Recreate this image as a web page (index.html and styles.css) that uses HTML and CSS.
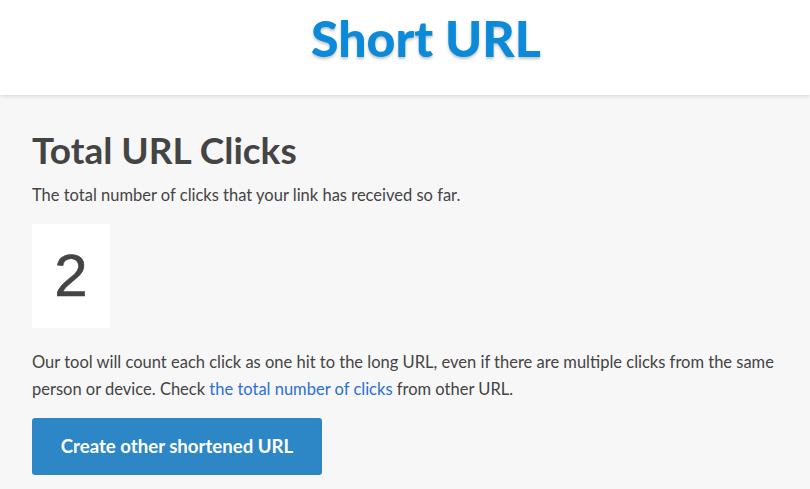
FILE: index.html
```html
<!DOCTYPE html>
<html lang="en">
<head>
  <meta charset="UTF-8" />
  <meta name="viewport" content="width=device-width, initial-scale=1.0"/>
  <title>Short URL - Total Clicks</title>
  <link rel="stylesheet" href="styles.css">
</head>
<body>
  <header class="site-header">
    <h1 class="logo">Short URL</h1>
  </header>

  <main class="content">
    <h2>Total URL Clicks</h2>
    <p class="lead">The total number of clicks that your link has received so far.</p>
    <div class="counter">2</div>
    <p class="note">Our tool will count each click as one hit to the long URL, even if there are multiple clicks from the same person or device. Check <a href="#">the total number of clicks</a> from other URL.</p>
    <a class="btn" href="#">Create other shortened URL</a>
  </main>
</body>
</html>
```

FILE: styles.css
```css
:root {
  --blue: #0b8ad9;
  --text: #444444;
  --bg: #f7f7f7;
  --white: #ffffff;
  --link: #2b6fd9;
  --button: #2d87c6;
}

* {
  box-sizing: border-box;
  margin: 0;
  padding: 0;
  font-family: 'Lato', sans-serif;
}

body {
  background-color: var(--bg);
  color: var(--text);
}

.site-header {
  background: var(--white);
  height: 95px;
  padding-left: 42px;
  box-shadow: 0 1px 4px rgba(0, 0, 0, 0.15);
  text-align: center;
  position: relative;
}

.logo {
  color: var(--blue);
  font-size: 50px;
  font-weight: 900;
  line-height: 76px;
  text-shadow: 0 2px 3px rgba(0, 0, 0, 0.25);
}

.content {
  padding: 30px 32px 0;
}

h2 {
  font-size: 37px;
  font-weight: 700;
  line-height: 50px;
  color: var(--text);
}

.lead {
  font-size: 16.5px;
  margin-top: 10px;
}

.counter {
  background: var(--white);
  width: 78px;
  height: 104px;
  margin-top: 19px;
  font-family: 'Liberation Sans', Arial, sans-serif;
  font-size: 60px;
  line-height: 104px;
  text-align: center;
  -webkit-text-stroke: 0.6px var(--text);
}

.note {
  font-size: 16.5px;
  line-height: 27px;
  margin-top: 21px;
}

.note a {
  color: var(--link);
  text-decoration: none;
}

.btn {
  display: inline-block;
  margin-top: 15px;
  width: 290px;
  height: 57px;
  line-height: 57px;
  background: var(--button);
  color: var(--white);
  border-radius: 3px;
  text-align: center;
  font-size: 18.6px;
  font-weight: 700;
  text-decoration: none;
}
```
